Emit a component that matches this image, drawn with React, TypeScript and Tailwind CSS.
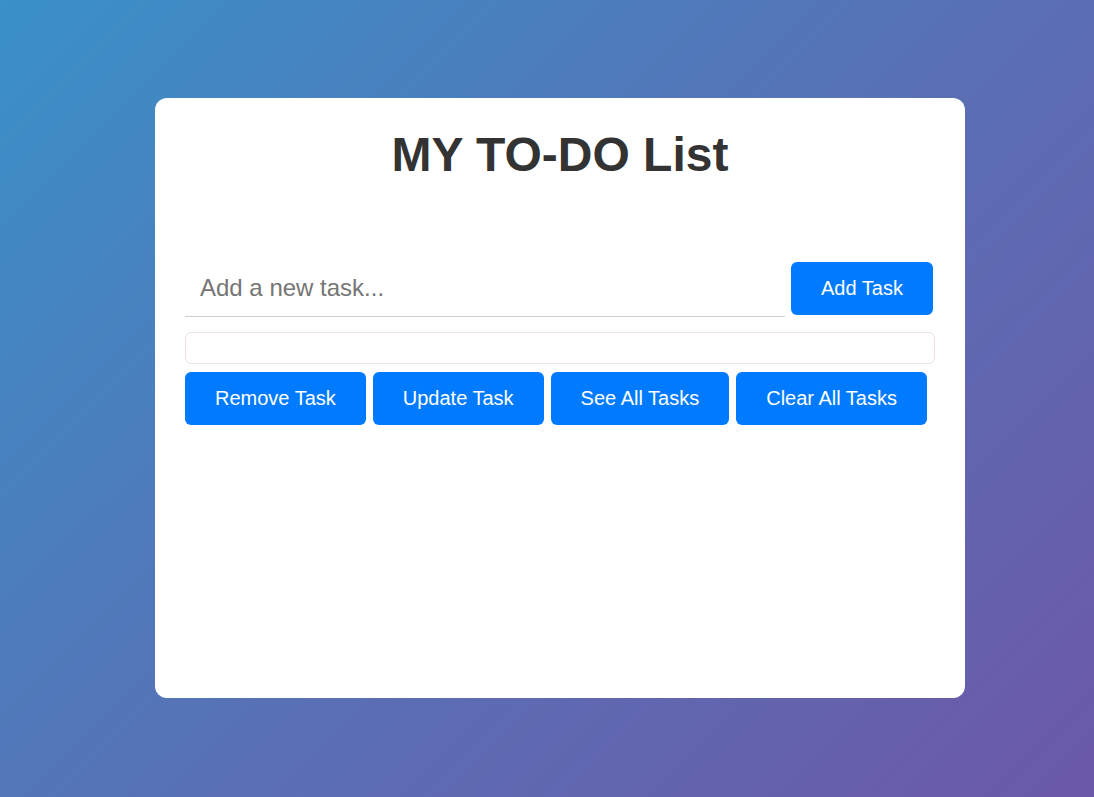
import { useState } from "react";

const actions = ["Remove Task", "Update Task", "See All Tasks", "Clear All Tasks"];

export default function App() {
  const [task, setTask] = useState("");

  return (
    <div
      className="min-h-screen w-full overflow-hidden bg-[linear-gradient(135deg,#3a90c8_0%,#5a6fb4_55%,#6c58a8_100%)] pt-[98px] pl-[155px]"
      style={{ fontFamily: '"Liberation Sans", Arial, sans-serif' }}
    >
      <div className="flex h-[600px] w-[810px] flex-col rounded-[12px] bg-white px-[30px] pt-[29px]">
        <h1 className="text-center text-[48px] font-bold leading-[55px] text-[#333]">MY TO-DO List</h1>

        <div className="mt-[80px] flex items-start gap-[6px]">
          <input
            value={task}
            onChange={(e) => setTask(e.target.value)}
            placeholder="Add a new task..."
            className="h-[55px] w-[600px] border-b border-[#cccccc] px-[15px] pb-[3px] text-[24px] text-[#333] outline-none placeholder:text-[#757575]"
          />
          <button className="h-[53px] rounded-[6px] bg-[#007bff] px-[30px] pb-[1px] text-[20px] text-white">Add Task</button>
        </div>

        <div className="mt-[15px] h-[32px] w-[750px] rounded-[6px] border border-[#ecdfe0]"></div>

        <div className="mt-[8px] flex gap-[7px]">
          {actions.map((label) => (
            <button key={label} className="h-[53px] rounded-[6px] bg-[#007bff] px-[30px] pb-[2px] text-[20px] text-white">
              {label}
            </button>
          ))}
        </div>
      </div>
    </div>
  );
}
